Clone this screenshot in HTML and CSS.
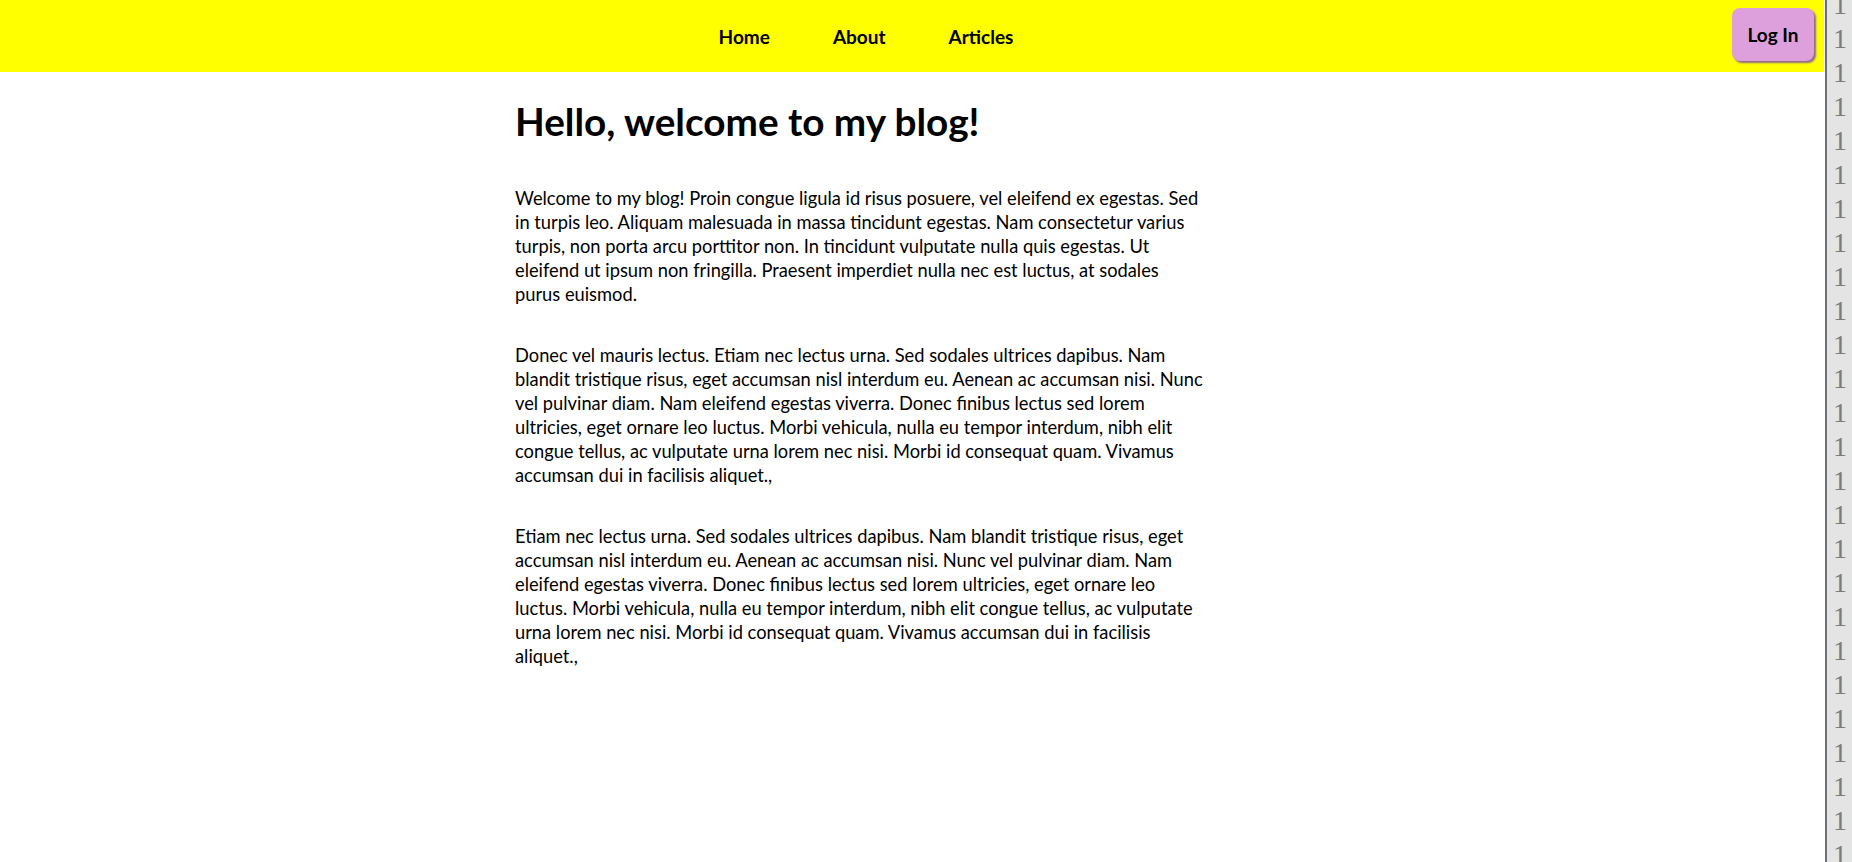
FILE: index.html
```html
<!DOCTYPE html>
<html lang="en">
<head>
<meta charset="utf-8">
<title>My Blog</title>
<link rel="stylesheet" href="styles.css">
</head>
<body>
<div class="page">
  <div class="main-col">
    <header class="topbar">
      <nav class="nav">
        <a class="nav-link" href="#">Home</a>
        <a class="nav-link" href="#">About</a>
        <a class="nav-link" href="#">Articles</a>
      </nav>
      <button class="login-btn" type="button">Log In</button>
    </header>
    <main class="content">
      <h1 class="title">Hello, welcome to my blog!</h1>
      <p class="para">Welcome to my blog! Proin congue ligula id risus posuere, vel eleifend ex egestas. Sed<br>in turpis leo. Aliquam malesuada in massa tincidunt egestas. Nam consectetur varius<br>turpis, non porta arcu porttitor non. In tincidunt vulputate nulla quis egestas. Ut<br>eleifend ut ipsum non fringilla. Praesent imperdiet nulla nec est luctus, at sodales<br>purus euismod.</p>
      <p class="para">Donec vel mauris lectus. Etiam nec lectus urna. Sed sodales ultrices dapibus. Nam<br>blandit tristique risus, eget accumsan nisl interdum eu. Aenean ac accumsan nisi. Nunc<br>vel pulvinar diam. Nam eleifend egestas viverra. Donec finibus lectus sed lorem<br>ultricies, eget ornare leo luctus. Morbi vehicula, nulla eu tempor interdum, nibh elit<br>congue tellus, ac vulputate urna lorem nec nisi. Morbi id consequat quam. Vivamus<br>accumsan dui in facilisis aliquet.,</p>
      <p class="para">Etiam nec lectus urna. Sed sodales ultrices dapibus. Nam blandit tristique risus, eget<br>accumsan nisl interdum eu. Aenean ac accumsan nisi. Nunc vel pulvinar diam. Nam<br>eleifend egestas viverra. Donec finibus lectus sed lorem ultricies, eget ornare leo<br>luctus. Morbi vehicula, nulla eu tempor interdum, nibh elit congue tellus, ac vulputate<br>urna lorem nec nisi. Morbi id consequat quam. Vivamus accumsan dui in facilisis<br>aliquet.,</p>
    </main>
  </div>
  <aside class="gutter">
    <div class="gutter-lines">1<br>1<br>1<br>1<br>1<br>1<br>1<br>1<br>1<br>1<br>1<br>1<br>1<br>1<br>1<br>1<br>1<br>1<br>1<br>1<br>1<br>1<br>1<br>1<br>1<br>1<br>1<br>1</div>
  </aside>
</div>
</body>
</html>
```

FILE: styles.css
```css
html, body {
  margin: 0;
  padding: 0;
  background: #ffffff;
}

body {
  font-family: "Lato", "Liberation Sans", sans-serif;
  color: #000000;
}

.page {
  display: flex;
  height: 100vh;
  overflow: hidden;
}

.main-col {
  flex: 1;
  min-width: 0;
}

.topbar {
  display: flex;
  align-items: flex-start;
  height: 72px;
  background: #ffff00;
}

.nav {
  flex: 1;
  display: flex;
  justify-content: center;
  align-items: center;
  gap: 63px;
  height: 72px;
}

.nav-link {
  color: #000000;
  text-decoration: none;
  font-weight: 700;
  font-size: 19px;
}

.login-btn {
  margin: 8px 10px 0 0;
  width: 82px;
  height: 53px;
  border: none;
  border-radius: 8px;
  background: #dda0dd;
  box-shadow: 2px 2px 2px #8d6a8d;
  font-family: "Lato", "Liberation Sans", sans-serif;
  font-weight: 700;
  font-size: 19px;
  color: #000000;
  padding: 0;
}

.content {
  padding: 0 0 0 515px;
  width: 740px;
}

.title {
  margin: 0;
  padding-top: 17px;
  font-size: 38.7px;
  font-weight: 700;
  line-height: 64px;
}

.para {
  font-size: 18.3px;
  line-height: 24px;
  margin: 33px 0 0 0;
  white-space: nowrap;
}

.para + .para {
  margin-top: 37px;
}

.gutter {
  width: 25px;
  margin-left: 1px;
  border-left: 2px solid #6f6f6f;
  background: #e4e4e4;
  overflow: hidden;
}

.gutter-lines {
  margin-top: -12px;
  padding-left: 6px;
  font-family: "Liberation Serif", serif;
  font-size: 28px;
  line-height: 34px;
  color: #7b7b7b;
}
```
